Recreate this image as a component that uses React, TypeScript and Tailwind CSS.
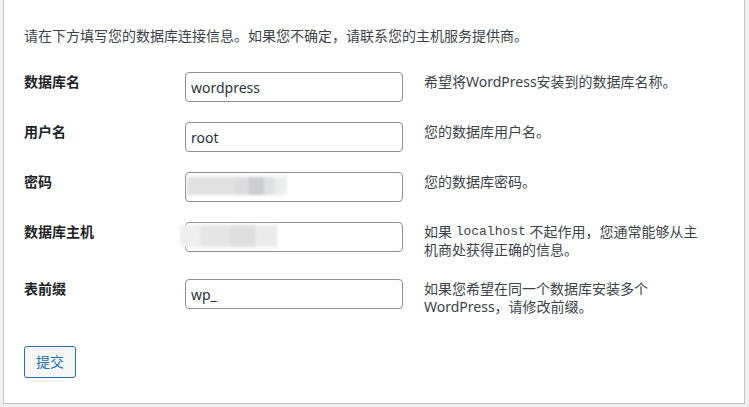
import React from "react";

type Field = {
  label: string;
  name: string;
  value: string;
  blurred?: "password" | "host";
  desc: React.ReactNode;
};

const fields: Field[] = [
  {
    label: "数据库名",
    name: "dbname",
    value: "wordpress",
    desc: "希望将WordPress安装到的数据库名称。",
  },
  {
    label: "用户名",
    name: "uname",
    value: "root",
    desc: "您的数据库用户名。",
  },
  {
    label: "密码",
    name: "pwd",
    value: "",
    blurred: "password",
    desc: "您的数据库密码。",
  },
  {
    label: "数据库主机",
    name: "dbhost",
    value: "",
    blurred: "host",
    desc: (
      <>
        如果{" "}
        <code className="align-top font-['Liberation_Mono','DejaVu_Sans_Mono',monospace] text-[13px] leading-[18px]">
          localhost
        </code>{" "}
        不起作用，您通常能够从主
        <br />
        机商处获得正确的信息。
      </>
    ),
  },
  {
    label: "表前缀",
    name: "prefix",
    value: "wp_",
    desc: (
      <>
        如果您希望在同一个数据库安装多个
        <br />
        WordPress，请修改前缀。
      </>
    ),
  },
];

// smeared-out value, as in the screenshot
const Blur = ({ kind }: { kind: "password" | "host" }) =>
  kind === "password" ? (
    <div className="pointer-events-none absolute left-[2px] top-[5px] flex h-[18px] blur-[1.5px]">
      <div className="w-[48px] bg-[#e1e1e2]" />
      <div className="w-[14px] bg-[#dcdcde]" />
      <div className="w-[15px] bg-[#cdced1]" />
      <div className="w-[11px] bg-[#dfe0e1]" />
      <div className="w-[12px] rounded-br-md bg-[#eceded]" />
    </div>
  ) : (
    <div className="pointer-events-none absolute -left-[5px] top-[3px] flex h-[22px] blur-[1.5px]">
      <div className="w-[20px] rounded-bl-md bg-[#eeeeef]" />
      <div className="w-[30px] bg-[#e6e6e7]" />
      <div className="w-[25px] bg-[#dedede]" />
      <div className="w-[22px] bg-[#ebebec]" />
    </div>
  );

export default function App() {
  return (
    <div className="min-h-[407px] bg-[#f0f0f1] pl-[3px] font-['Noto_Sans','Noto_Sans_CJK_SC',sans-serif] text-[14px] text-[#3c434a]">
      <div className="w-[742px] border-x border-b border-[#c3c4c7] bg-white pl-[20px] pt-[27px] pb-[25px]">
        <p className="leading-[18px]">
          请在下方填写您的数据库连接信息。如果您不确定，请联系您的主机服务提供商。
        </p>

        <div className="mt-[17px]">
          {fields.map((f) => (
            <div
              key={f.name}
              className="grid grid-cols-[161px_218px_1fr] items-start py-[10px]"
            >
              <label
                htmlFor={f.name}
                className="h-[30px] pt-[1px] font-bold leading-[18px] text-[#1d2327]"
              >
                {f.label}
              </label>
              <div className="relative h-[30px]">
                <input
                  id={f.name}
                  defaultValue={f.value}
                  className="h-[30px] w-[218px] rounded-[4px] border border-[#8c8f94] bg-white px-[5px] font-['Noto_Sans','Open_Sans',sans-serif] text-[14px] text-[#2c3338] outline-none"
                />
                {f.blurred && <Blur kind={f.blurred} />}
              </div>
              <div className="pl-[21px] pt-[1px] leading-[18px]">{f.desc}</div>
            </div>
          ))}
        </div>

        <button className="mt-[20px] h-[32px] w-[52px] rounded-[3px] border border-[#2271b1] bg-[#f6f7f7] text-[14px] leading-none text-[#2271b1]">
          提交
        </button>
      </div>
    </div>
  );
}
